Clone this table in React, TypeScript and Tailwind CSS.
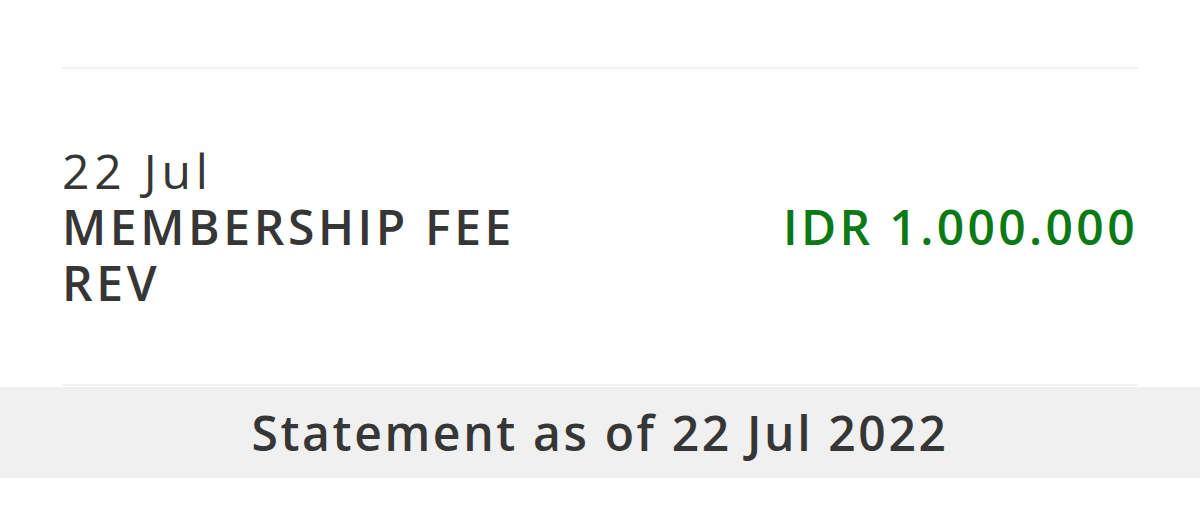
export default function App() {
  return (
    <div className="min-h-screen bg-white font-['Open_Sans',sans-serif] text-[#363636]">
      <div className="px-[62px] pt-[67px]">
        <div className="border-t-2 border-[#f2f2f2]" />
        <div className="flex h-[315px] items-center justify-between">
          <div className="text-[48px] leading-[56px]">
            <div className="font-normal tracking-[0.1em]">22 Jul</div>
            <div className="w-[520px] font-semibold tracking-[0.075em]">MEMBERSHIP FEE REV</div>
          </div>
          <div className="text-[48px] font-semibold leading-[56px] tracking-[0.07em] text-[#0b7a14]">
            IDR 1.000.000
          </div>
        </div>
        <div className="border-t-2 border-[#f2f2f2]" />
      </div>
      <div className="mt-px flex h-[91px] items-center justify-center bg-[#f0f0f0] text-[48px] font-semibold tracking-[0.055em]">
        Statement as of 22 Jul 2022
      </div>
    </div>
  );
}
